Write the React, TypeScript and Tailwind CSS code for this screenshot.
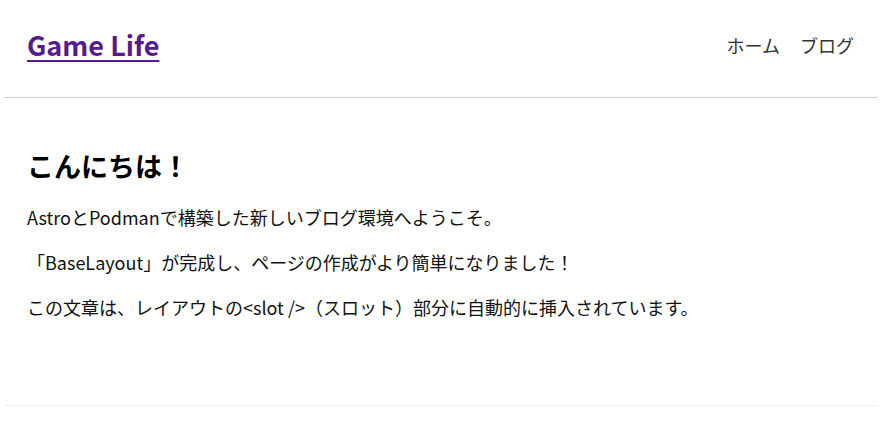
export default function App() {
  return (
    <div
      className="min-h-screen bg-white text-[#111] text-[18px] ml-[4px] mr-[11px]"
      style={{ fontFamily: '"Noto Sans CJK JP", sans-serif' }}
    >
      {/* ヘッダー */}
      <header className="flex items-center justify-between h-[98px] px-[23px] pb-[7px] border-b border-[#cccccc]">
        <a href="#" className="text-[27px] font-bold text-[#551a8b] underline underline-offset-[4px]">
          Game Life
        </a>
        <nav className="flex gap-[20px] text-[#333]">
          <a href="#">ホーム</a>
          <a href="#">ブログ</a>
        </nav>
      </header>

      {/* メイン */}
      <main className="px-[23px] pt-[49px] pb-[66px] border-b border-[#eeeeee]">
        <h2 className="text-[27px] font-bold text-black leading-[1.4] mb-[19px]">こんにちは！</h2>
        <p className="leading-[1.5] mb-[18px]">AstroとPodmanで構築した新しいブログ環境へようこそ。</p>
        <p className="leading-[1.5] mb-[18px]">「BaseLayout」が完成し、ページの作成がより簡単になりました！</p>
        <p className="leading-[1.5] mb-[18px]">この文章は、レイアウトの&lt;slot /&gt;（スロット）部分に自動的に挿入されています。</p>
      </main>
    </div>
  )
}
